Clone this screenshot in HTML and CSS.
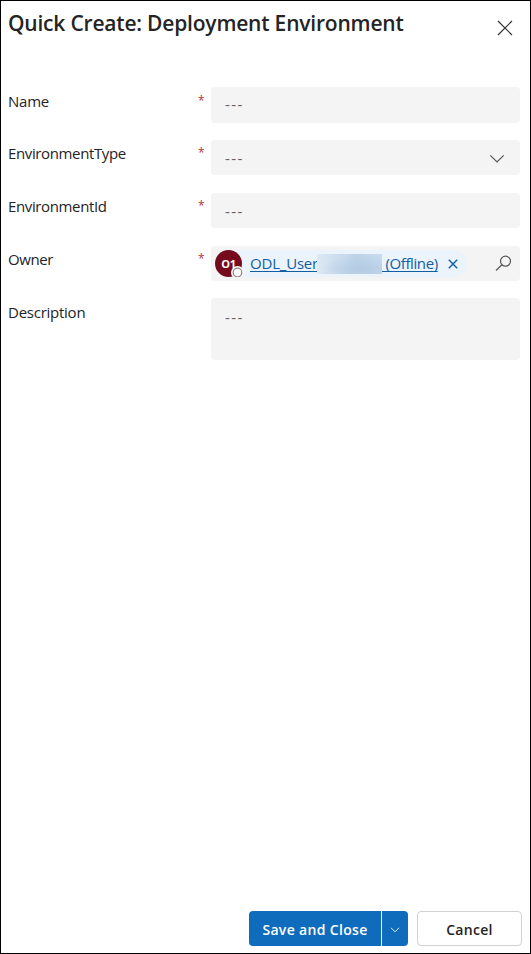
FILE: index.html
```html
<!DOCTYPE html>
<html lang="en">
<head>
<meta charset="utf-8">
<title>Quick Create: Deployment Environment</title>
<link rel="stylesheet" href="styles.css">
</head>
<body>
<main class="panel">
  <header class="header">
    <h1 class="title"><span>Quick Create: Deployment Environment</span></h1>
    <svg class="close" width="16" height="16" viewBox="0 0 16 16"><path d="M1 1l14 14M15 1L1 15"/></svg>
  </header>
  <form class="form">
    <div class="row row-first">
      <label class="label">Name</label><span class="req">*</span>
      <div class="field"><span class="dash">---</span></div>
    </div>
    <div class="row">
      <label class="label type">EnvironmentType</label><span class="req">*</span>
      <div class="field"><span class="dash">---</span>
        <svg class="chevron" width="16" height="10" viewBox="0 0 16 10"><path d="M1.3 1.3L8 8l6.700-6.700"/></svg>
      </div>
    </div>
    <div class="row">
      <label class="label type">EnvironmentId</label><span class="req">*</span>
      <div class="field"><span class="dash">---</span></div>
    </div>
    <div class="row">
      <label class="label owner">Owner</label><span class="req">*</span>
      <div class="field lookup">
        <div class="pill">
          <span class="avatar">O1<svg class="presence" width="13" height="11" viewBox="0 0 13 11"><circle class="ring" cx="6.500" cy="6.500" r="6.500"/><circle class="dot" cx="6.500" cy="6.500" r="4.300"/></svg></span>
          <a class="user">ODL_User</a><span class="redacted"></span><a class="status">&nbsp;(Offline)</a>
          <svg class="remove" width="10" height="10" viewBox="0 0 10 10"><path d="M.8.8l8.400 8.400M9.200.8L.8 9.200"/></svg>
        </div>
        <svg class="search" width="17" height="17" viewBox="0 0 17 17"><circle cx="10.500" cy="6.200" r="5"/><path d="M6.900 9.800L1 15.500"/></svg>
      </div>
    </div>
    <div class="row row-last">
      <label class="label">Description</label><span class="req"></span>
      <div class="field area"><span class="dash">---</span></div>
    </div>
  </form>
  <footer class="footer">
    <div class="split">
      <button class="save"><span>Save and Close</span></button>
      <button class="more"><svg width="10" height="6" viewBox="0 0 10 6"><path d="M1 .8l4 4 4-4"/></svg></button>
    </div>
    <button class="cancel"><span>Cancel</span></button>
  </footer>
</main>
</body>
</html>
```
FILE: styles.css
```css
* { box-sizing: border-box; }
body { margin: 0; background: #fff; font-family: "Open Sans", "Noto Sans", sans-serif; color: #242424; }
svg { display: block; flex: none; fill: none; }
.panel { width: 531px; height: 954px; border: 1px solid #000; display: flex; flex-direction: column; }
.header { height: 86px; padding: 8px 17px 0 7px; display: flex; justify-content: space-between; align-items: flex-start; }
.title { margin: 0; font-size: 21px; line-height: 28px; font-weight: 600; white-space: nowrap; letter-spacing: -0.200px; }
.close { margin-top: 11px; stroke: #333; stroke-width: 1.200; }
.form { display: flex; flex-direction: column; flex: 1; padding: 0 10px 0 7px; }
.row { display: grid; grid-template-columns: 190px 13px 309px; height: 35px; margin-bottom: 18px; font-size: 15px; line-height: 20px; }
.row-first { height: 36px; margin-bottom: 17px; }
.row:nth-child(4) { margin-bottom: 17px; }
.row-last { height: 62px; }
.label, .req { margin-top: 3px; white-space: nowrap; }
.row-first .label, .row-first .req, .row-last .label { margin-top: 4px; }
.label { letter-spacing: -0.250px; }
.type { letter-spacing: -0.370px; }
.owner { letter-spacing: -0.400px; }
.req { color: #b5323a; font-size: 12px; }
.field { background: #f4f4f4; border-radius: 4px; display: flex; align-items: center; justify-content: space-between; padding: 0 15px 0 14px; }
.dash { color: #616161; letter-spacing: 1.400px; }
.row-first .dash { position: relative; top: -1px; }
.area { align-items: flex-start; padding-top: 9px; }
.chevron { stroke: #555; stroke-width: 1.200; margin-top: 2px; }
.lookup { padding: 0 8px 0 4px; }
.pill { height: 27px; width: 252px; border-radius: 14px; background: #ebf3fc; display: flex; align-items: center; }
.avatar { position: relative; width: 27px; height: 27px; flex: none; border-radius: 50%; background: #750b1c; color: #fff; font-size: 11px; font-weight: 700; line-height: 27px; text-align: center; margin-right: 8px; letter-spacing: -0.3px; }
.presence { position: absolute; left: 16px; top: 16px; }
.ring { fill: #fff; }
.dot { stroke: #8b8b8b; stroke-width: 1.300; }
.user, .status { color: #115ea3; text-decoration: underline; text-decoration-thickness: 1px; text-underline-offset: 2px; white-space: nowrap; letter-spacing: -0.200px; margin-top: -1px; }
.user { width: 67px; }
.redacted { width: 65px; height: 20px; flex: none; background: radial-gradient(ellipse at 70% 75%, #b3cbe3, transparent 65%), linear-gradient(90deg, #dce9f5, #bfd3e8 60%, #c9dcef); }
.status { width: 57px; letter-spacing: -0.400px; }
.remove { margin-left: 9px; stroke: #115ea3; stroke-width: 1.400; }
.search { stroke: #555; stroke-width: 1.200; }
.footer { height: 42px; display: flex; justify-content: flex-end; gap: 9px; padding-right: 8px; }
.split { display: flex; gap: 1px; height: 35px; }
button { font: 600 14px/20px "Open Sans", "Noto Sans", sans-serif; border: 0; padding: 0; height: 35px; white-space: nowrap; display: flex; align-items: center; justify-content: center; }
.save { width: 132px; background: #0f6cbd; color: #fff; border-radius: 4px 0 0 4px; padding-top: 2px; letter-spacing: 0.330px; }
.more { width: 26px; background: #0f6cbd; border-radius: 0 4px 4px 0; }
.more svg { stroke: #fff; stroke-width: .9; margin-top: 3px; }
.cancel { width: 105px; background: #fff; color: #242424; border: 1px solid #d1d1d1; border-radius: 4px; padding-top: 2px; letter-spacing: 0.300px; }
```
